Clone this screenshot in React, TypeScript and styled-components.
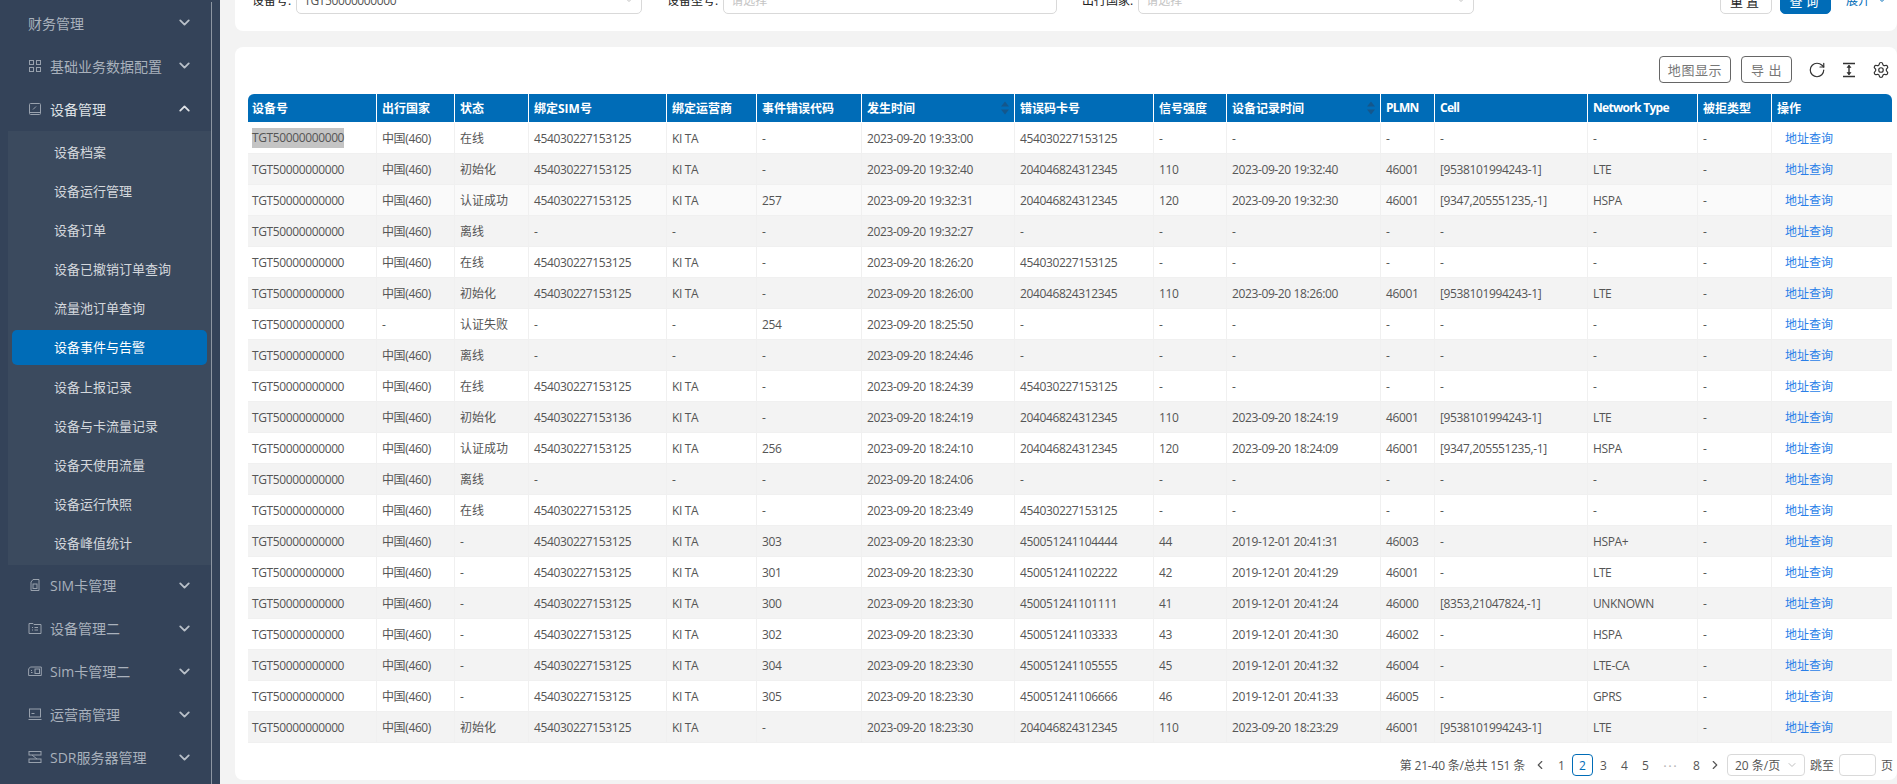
import React from 'react';
import styled, { createGlobalStyle } from 'styled-components';
import { ChevronDown, ChevronUp, ChevronLeft, ChevronRight, RotateCw, Settings } from 'lucide-react';

const FONT = `"Open Sans", "Noto Sans CJK SC", sans-serif`;

const GlobalStyle = createGlobalStyle`
  html, body {
    margin: 0;
    padding: 0;
    height: 784px;
    overflow: hidden;
    background: #f3f3f3;
    font-family: ${FONT};
  }
  * {
    box-sizing: border-box;
  }
`;

const Page = styled.div`
  display: flex;
  width: 1897px;
  height: 784px;
  overflow: hidden;
`;

const Sidebar = styled.aside`
  flex: 0 0 220px;
  height: 784px;
  overflow: hidden;
  background: #344359;
  padding-top: 2px;
  padding-right: 8px;
`;

const MenuColumn = styled.div`
  width: 212px;
  border-right: 1px solid #8d96a2;
  min-height: 784px;
`;

const MenuItem = styled.div<{ $open?: boolean }>`
  height: 43px;
  display: flex;
  align-items: center;
  padding: 0 18px 2px 28px;
  gap: 8px;
  font-size: 14px;
  color: ${(p) => (p.$open ? '#dfe2e6' : '#a9b1bc')};

  svg.glyph {
    flex: 0 0 14px;
    color: #98a1ad;
  }
  svg.arrow {
    color: ${(p) => (p.$open ? '#dfe2e6' : '#b9c0c9')};
  }
`;

const MenuLabel = styled.span`
  flex: 1;
  white-space: nowrap;
`;

const SubMenu = styled.div`
  margin-left: 8px;
  padding: 4px 4px;
  background: #3b4a5e;
  display: flex;
  flex-direction: column;
  gap: 4.1px;
`;

const SubItem = styled.div<{ $active?: boolean }>`
  height: 35px;
  display: flex;
  align-items: center;
  padding: 0 0 2px 42px;
  border-radius: 5px;
  font-size: 13px;
  color: ${(p) => (p.$active ? '#ffffff' : '#d4d8dd')};
  background: ${(p) => (p.$active ? '#006cb7' : 'transparent')};
`;

const Main = styled.main`
  flex: 1;
  min-width: 0;
  padding-left: 15px;
  display: flex;
  flex-direction: column;
  gap: 16px;
`;

const FilterCard = styled.section`
  height: 31px;
  background: #fff;
  border-radius: 0 0 8px 8px;
  overflow: hidden;
  padding-left: 17px;
  padding-right: 9px;
`;

const FilterRow = styled.div`
  margin-top: -13px;
  height: 26px;
  display: flex;
  align-items: center;
`;

const FilterItem = styled.div<{ $width: number; $gap: number }>`
  width: ${(p) => p.$width}px;
  margin-right: ${(p) => p.$gap}px;
  display: flex;
  align-items: center;
  gap: 5px;
  font-size: 12px;
  color: #222;
  white-space: nowrap;
`;

const FilterInput = styled.div<{ $placeholder?: boolean }>`
  flex: 1;
  height: 27px;
  border: 1px solid #d9d9d9;
  border-radius: 5px;
  display: flex;
  align-items: center;
  justify-content: space-between;
  padding: 0 6px 0 7px;
  font-size: 12px;
  letter-spacing: ${(p) => (p.$placeholder ? '0' : '-0.38px')};
  color: ${(p) => (p.$placeholder ? '#c4c4c4' : '#555')};

  svg {
    color: #bfbfbf;
  }
`;

const FilterActions = styled.div`
  margin-left: auto;
  display: flex;
  align-items: center;
  gap: 8px;
`;

const FilterButton = styled.button<{ $primary?: boolean }>`
  height: 27px;
  padding: 0;
  width: ${(p) => (p.$primary ? 51 : 52)}px;
  border-radius: 5px;
  border: 1px solid ${(p) => (p.$primary ? '#006cb7' : '#d9d9d9')};
  background: ${(p) => (p.$primary ? '#006cb7' : '#fff')};
  color: ${(p) => (p.$primary ? '#fff' : '#222')};
  font-family: ${FONT};
  font-size: 13px;
  letter-spacing: 3px;
`;

const ExpandLink = styled.span`
  margin-left: 7px;
  display: flex;
  align-items: center;
  gap: 6px;
  font-size: 12px;
  color: #006cb7;
`;

const TableCard = styled.section`
  height: 733px;
  background: #fff;
  border-radius: 8px 8px 8px 8px;
  padding: 9px 5px 0 13px;
  display: flex;
  flex-direction: column;
`;

const Toolbar = styled.div`
  height: 27px;
  margin-bottom: 11px;
  display: flex;
  justify-content: flex-end;
  align-items: center;
  gap: 10px;
`;

const ToolButton = styled.button<{ $width: number }>`
  width: ${(p) => p.$width}px;
  height: 27px;
  padding: 0;
  border: 1px solid #666;
  border-radius: 4px;
  background: #fff;
  color: #777;
  font-family: ${FONT};
  font-size: 13px;
  letter-spacing: 0.6px;
`;

const ToolIcons = styled.div`
  display: flex;
  align-items: center;
  gap: 14px;
  margin-left: 6px;
  margin-right: 2px;
  color: #333;

  svg {
    display: block;
  }
`;

const Table = styled.table`
  width: 1644px;
  table-layout: fixed;
  border-collapse: separate;
  border-spacing: 0;
  font-size: 12px;
`;

const Col = styled.col<{ $w: number }>`
  width: ${(p) => p.$w}px;
`;

const Th = styled.th<{ $latin?: boolean }>`
  height: 29px;
  padding: 0 4px 1px 5px;
  background: #006cb7;
  background-clip: padding-box;
  border-right: 1px solid #fff;
  border-bottom: 1px solid #fff;
  color: #fff;
  font-weight: 700;
  font-size: 12px;
  letter-spacing: ${(p) => (p.$latin ? '-0.7px' : '0')};
  text-align: left;
  white-space: nowrap;

  &:first-child {
    padding-left: 4px;
    border-top-left-radius: 6px;
  }
  &:last-child {
    border-right: none;
    border-top-right-radius: 6px;
  }
`;

const ThInner = styled.div`
  display: flex;
  align-items: center;
  justify-content: space-between;

  svg {
    flex: 0 0 10px;
  }
`;

const Tr = styled.tr<{ $bg: string }>`
  background: ${(p) => p.$bg};
`;

const Td = styled.td<{ $latin?: boolean }>`
  height: 31px;
  padding: 0 4px 0 5px;
  border-right: 1px solid #f0f0f0;
  border-bottom: 1px solid #f0f0f0;
  color: #555;
  white-space: nowrap;
  letter-spacing: ${(p) => (p.$latin ? '-0.38px' : '0')};

  &:first-child {
    padding-left: 4px;
  }
  &:last-child {
    border-right: none;
    padding-left: 13px;
  }
`;

const Selected = styled.span`
  display: inline-block;
  background: #c4c4c4;
  line-height: 20px;
`;

const AddressLink = styled.a`
  color: #2a7fe8;
`;

const Pagination = styled.div`
  height: 22px;
  margin-top: 11px;
  margin-right: -1px;
  display: flex;
  align-items: center;
  justify-content: flex-end;
  font-size: 12px;
  color: #555;
`;

const Total = styled.span`
  margin-right: 5px;
  letter-spacing: -0.2px;
`;

const PageCell = styled.span<{ $current?: boolean; $width?: number }>`
  width: ${(p) => p.$width ?? 21}px;
  height: 22px;
  display: flex;
  align-items: center;
  justify-content: center;
  border: 1px solid ${(p) => (p.$current ? '#006cb7' : 'transparent')};
  border-radius: 4px;
  color: ${(p) => (p.$current ? '#006cb7' : '#555')};
`;

const PageGap = styled(PageCell)`
  color: #bbb;
  font-size: 8px;
  letter-spacing: 2px;
`;

const PageSelect = styled.div`
  width: 78px;
  height: 22px;
  margin-left: 3px;
  margin-right: 5px;
  border: 1px solid #d9d9d9;
  border-radius: 4px;
  display: flex;
  align-items: center;
  justify-content: space-between;
  padding: 0 6px 0 7px;
  white-space: nowrap;

  svg {
    color: #bfbfbf;
  }
`;

const JumpInput = styled.div`
  width: 37px;
  height: 22px;
  margin: 0 5px;
  border: 1px solid #d9d9d9;
  border-radius: 4px;
`;

const columns = [
  { title: '设备号', w: 129 },
  { title: '出行国家', w: 78 },
  { title: '状态', w: 74 },
  { title: '绑定SIM号', w: 138 },
  { title: '绑定运营商', w: 90 },
  { title: '事件错误代码', w: 105 },
  { title: '发生时间', w: 153, sort: true },
  { title: '错误码卡号', w: 139 },
  { title: '信号强度', w: 73 },
  { title: '设备记录时间', w: 154, sort: true },
  { title: 'PLMN', w: 54, latin: true },
  { title: 'Cell', w: 153, latin: true },
  { title: 'Network Type', w: 110, latin: true },
  { title: '被拒类型', w: 74 },
  { title: '操作', w: 120 },
];

const SIM = '454030227153125';
const CARD = '204046824312345';
const C1 = '[9538101994243-1]';
const C2 = '[9347,205551235,-1]';
const D = '2023-09-20 ';
const E = '2019-12-01 ';
const CN = '中国(460)';

// 国家, 状态, SIM, 运营商, 错误码, 发生时间, 卡号, 信号, 记录时间, PLMN, Cell, 网络
const rows: string[][] = [
  [CN, '在线', SIM, 'KI TA', '-', D + '19:33:00', SIM, '-', '-', '-', '-', '-'],
  [CN, '初始化', SIM, 'KI TA', '-', D + '19:32:40', CARD, '110', D + '19:32:40', '46001', C1, 'LTE'],
  [CN, '认证成功', SIM, 'KI TA', '257', D + '19:32:31', CARD, '120', D + '19:32:30', '46001', C2, 'HSPA'],
  [CN, '离线', '-', '-', '-', D + '19:32:27', '-', '-', '-', '-', '-', '-'],
  [CN, '在线', SIM, 'KI TA', '-', D + '18:26:20', SIM, '-', '-', '-', '-', '-'],
  [CN, '初始化', SIM, 'KI TA', '-', D + '18:26:00', CARD, '110', D + '18:26:00', '46001', C1, 'LTE'],
  ['-', '认证失败', '-', '-', '254', D + '18:25:50', '-', '-', '-', '-', '-', '-'],
  [CN, '离线', '-', '-', '-', D + '18:24:46', '-', '-', '-', '-', '-', '-'],
  [CN, '在线', SIM, 'KI TA', '-', D + '18:24:39', SIM, '-', '-', '-', '-', '-'],
  [CN, '初始化', '454030227153136', 'KI TA', '-', D + '18:24:19', CARD, '110', D + '18:24:19', '46001', C1, 'LTE'],
  [CN, '认证成功', SIM, 'KI TA', '256', D + '18:24:10', CARD, '120', D + '18:24:09', '46001', C2, 'HSPA'],
  [CN, '离线', '-', '-', '-', D + '18:24:06', '-', '-', '-', '-', '-', '-'],
  [CN, '在线', SIM, 'KI TA', '-', D + '18:23:49', SIM, '-', '-', '-', '-', '-'],
  [CN, '-', SIM, 'KI TA', '303', D + '18:23:30', '450051241104444', '44', E + '20:41:31', '46003', '-', 'HSPA+'],
  [CN, '-', SIM, 'KI TA', '301', D + '18:23:30', '450051241102222', '42', E + '20:41:29', '46001', '-', 'LTE'],
  [CN, '-', SIM, 'KI TA', '300', D + '18:23:30', '450051241101111', '41', E + '20:41:24', '46000', '[8353,21047824,-1]', 'UNKNOWN'],
  [CN, '-', SIM, 'KI TA', '302', D + '18:23:30', '450051241103333', '43', E + '20:41:30', '46002', '-', 'HSPA'],
  [CN, '-', SIM, 'KI TA', '304', D + '18:23:30', '450051241105555', '45', E + '20:41:32', '46004', '-', 'LTE-CA'],
  [CN, '-', SIM, 'KI TA', '305', D + '18:23:30', '450051241106666', '46', E + '20:41:33', '46005', '-', 'GPRS'],
  [CN, '初始化', SIM, 'KI TA', '-', D + '18:23:30', CARD, '110', D + '18:23:29', '46001', C1, 'LTE'],
];

const subItems = [
  '设备档案',
  '设备运行管理',
  '设备订单',
  '设备已撤销订单查询',
  '流量池订单查询',
  '设备事件与告警',
  '设备上报记录',
  '设备与卡流量记录',
  '设备天使用流量',
  '设备运行快照',
  '设备峰值统计',
];

const Glyph = ({ children }: { children: React.ReactNode }) => (
  <svg className="glyph" width="14" height="14" viewBox="0 0 14 14" fill="none" stroke="currentColor" strokeWidth="1">
    {children}
  </svg>
);

const GridIcon = () => (
  <Glyph>
    <rect x="1.5" y="1.5" width="4" height="4" />
    <rect x="8.5" y="1.5" width="4" height="4" />
    <rect x="1.5" y="8.5" width="4" height="4" />
    <rect x="8.5" y="8.5" width="4" height="4" />
  </Glyph>
);

const MonitorIcon = () => (
  <Glyph>
    <rect x="1.5" y="1.5" width="11" height="11" rx="1" />
    <path d="M1.5 10.5h11M5 7.5l3-3" />
  </Glyph>
);

const SimIcon = () => (
  <Glyph>
    <path d="M5 1.5h6v11H3V4z" />
    <rect x="5" y="6" width="4" height="4.5" />
  </Glyph>
);

const FolderIcon = () => (
  <Glyph>
    <path d="M1 2.5h4l1 1h7v9H1z" />
    <path d="M4 6.5h1M6.5 6.5H10M4 9h1M6.5 9H10" />
  </Glyph>
);

const CardIcon = () => (
  <Glyph>
    <path d="M2.5 3h11v8.5H.8V5z" transform="translate(-.2 0)" />
    <rect x="7" y="5" width="4.5" height="4.5" />
    <path d="M3 8.5h1.5M3 6.5h1" />
  </Glyph>
);

const LaptopIcon = () => (
  <Glyph>
    <rect x="1.5" y="2" width="11" height="8" />
    <path d="M.5 12.5h13M3.5 6.5h3" />
  </Glyph>
);

const ServerIcon = () => (
  <Glyph>
    <rect x="1" y="1.5" width="12" height="3.5" />
    <rect x="1" y="9" width="12" height="3.5" />
    <path d="M4 5l5 4" />
  </Glyph>
);

const HeightIcon = () => (
  <svg width="18" height="18" viewBox="0 0 18 18" fill="none" stroke="currentColor" strokeWidth="1.4">
    <path d="M3 2.5h12M3 15.5h12M9 4.5v9" />
    <path d="M9 4l-2 2.5h4zM9 14l-2-2.5h4z" fill="currentColor" strokeWidth="0.6" />
  </svg>
);

const SortIcon = () => (
  <svg width="10" height="14" viewBox="0 0 10 14" fill="#14578c">
    <path d="M5 0.5l4 5H1zM5 13.5l-4-5h8z" />
  </svg>
);

const chevron = { size: 17, strokeWidth: 2.6, className: 'arrow' };

const Menu = ({ icon, label }: { icon?: React.ReactNode; label: string }) => (
  <MenuItem>
    {icon}
    <MenuLabel>{label}</MenuLabel>
    <ChevronDown {...chevron} />
  </MenuItem>
);

const rowBg = (i: number) => {
  if (i % 2 === 1) return '#f3f3f3';
  return i === 2 ? '#fafafa' : '#ffffff';
};

export default function App() {
  return (
    <Page>
      <GlobalStyle />
      <Sidebar>
        <MenuColumn>
          <Menu label="财务管理" />
          <Menu icon={<GridIcon />} label="基础业务数据配置" />
          <MenuItem $open>
            <MonitorIcon />
            <MenuLabel>设备管理</MenuLabel>
            <ChevronUp {...chevron} />
          </MenuItem>
          <SubMenu>
            {subItems.map((s) => (
              <SubItem key={s} $active={s === '设备事件与告警'}>
                {s}
              </SubItem>
            ))}
          </SubMenu>
          <Menu icon={<SimIcon />} label="SIM卡管理" />
          <Menu icon={<FolderIcon />} label="设备管理二" />
          <Menu icon={<CardIcon />} label="Sim卡管理二" />
          <Menu icon={<LaptopIcon />} label="运营商管理" />
          <Menu icon={<ServerIcon />} label="SDR服务器管理" />
        </MenuColumn>
      </Sidebar>

      <Main>
        <FilterCard>
          <FilterRow>
            <FilterItem $width={390} $gap={25}>
              设备号:
              <FilterInput>
                TGT50000000000
                <ChevronDown size={12} />
              </FilterInput>
            </FilterItem>
            <FilterItem $width={390} $gap={25}>
              设备型号:
              <FilterInput $placeholder>请选择</FilterInput>
            </FilterItem>
            <FilterItem $width={392} $gap={0}>
              出行国家:
              <FilterInput $placeholder>
                请选择
                <ChevronDown size={12} />
              </FilterInput>
            </FilterItem>
            <FilterActions>
              <FilterButton>重置</FilterButton>
              <FilterButton $primary>查询</FilterButton>
              <ExpandLink>
                展开
                <ChevronDown size={12} />
              </ExpandLink>
            </FilterActions>
          </FilterRow>
        </FilterCard>

        <TableCard>
          <Toolbar>
            <ToolButton $width={72}>地图显示</ToolButton>
            <ToolButton $width={51}>导 出</ToolButton>
            <ToolIcons>
              <RotateCw size={18} strokeWidth={1.6} />
              <HeightIcon />
              <Settings size={18} strokeWidth={1.6} />
            </ToolIcons>
          </Toolbar>

          <Table>
            <colgroup>
              {columns.map((c) => (
                <Col key={c.title} $w={c.w} />
              ))}
            </colgroup>
            <thead>
              <tr>
                {columns.map((c) => (
                  <Th key={c.title} $latin={c.latin}>
                    <ThInner>
                      {c.title}
                      {c.sort && <SortIcon />}
                    </ThInner>
                  </Th>
                ))}
              </tr>
            </thead>
            <tbody>
              {rows.map((r, i) => (
                <Tr key={i} $bg={rowBg(i)}>
                  <Td $latin>{i === 0 ? <Selected>TGT50000000000</Selected> : 'TGT50000000000'}</Td>
                  {r.map((v, j) => (
                    <Td key={j} $latin={j !== 1}>
                      {v}
                    </Td>
                  ))}
                  <Td>-</Td>
                  <Td>
                    <AddressLink>地址查询</AddressLink>
                  </Td>
                </Tr>
              ))}
            </tbody>
          </Table>

          <Pagination>
            <Total>第 21-40 条/总共 151 条</Total>
            <PageCell>
              <ChevronLeft size={14} />
            </PageCell>
            <PageCell>1</PageCell>
            <PageCell $current>2</PageCell>
            <PageCell>3</PageCell>
            <PageCell>4</PageCell>
            <PageCell>5</PageCell>
            <PageGap $width={30}>•••</PageGap>
            <PageCell>8</PageCell>
            <PageCell $width={17}>
              <ChevronRight size={14} />
            </PageCell>
            <PageSelect>
              20 条/页
              <ChevronDown size={12} />
            </PageSelect>
            跳至
            <JumpInput />页
          </Pagination>
        </TableCard>
      </Main>
    </Page>
  );
}
